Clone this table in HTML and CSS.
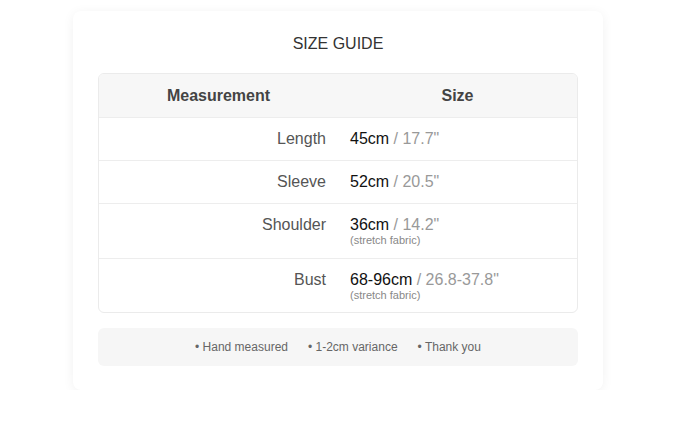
FILE: index.html
```html
<!DOCTYPE html>
<html>
<head>
<meta charset="utf-8">
<link rel="stylesheet" href="styles.css">
</head>
<body>
<div class="card">
  <h2 class="title">SIZE GUIDE</h2>
  <div class="table">
    <div class="row head">
      <div class="cell hcell">Measurement</div>
      <div class="cell hcell">Size</div>
    </div>
    <div class="row">
      <div class="cell label">Length</div>
      <div class="cell value"><span class="cm">45cm</span> <span class="in">/ 17.7"</span></div>
    </div>
    <div class="row">
      <div class="cell label">Sleeve</div>
      <div class="cell value"><span class="cm">52cm</span> <span class="in">/ 20.5"</span></div>
    </div>
    <div class="row">
      <div class="cell label">Shoulder</div>
      <div class="cell value"><span class="cm">36cm</span> <span class="in">/ 14.2"</span><div class="note">(stretch fabric)</div></div>
    </div>
    <div class="row last">
      <div class="cell label">Bust</div>
      <div class="cell value"><span class="cm">68-96cm</span> <span class="in">/ 26.8-37.8"</span><div class="note">(stretch fabric)</div></div>
    </div>
  </div>
  <div class="footer">
    <span>• Hand measured</span>
    <span>• 1-2cm variance</span>
    <span>• Thank you</span>
  </div>
</div>
</body>
</html>
```
FILE: styles.css
```css
body {
  margin: 0;
  padding-left: 2px;
  background: #fff;
  font-family: "Liberation Sans", Arial, sans-serif;
}
.card {
  width: 530px;
  box-sizing: border-box;
  margin: 11px auto 0;
  padding: 24px 25px 24px;
  background: #fff;
  border-radius: 8px;
  box-shadow: 0 2px 12px rgba(0,0,0,0.06);
}
.title {
  margin: 0 0 20px;
  text-align: center;
  font-size: 16px;
  line-height: 18px;
  font-weight: normal;
  color: #333;
}
.table {
  border: 1px solid #ebebeb;
  border-radius: 6px;
  overflow: hidden;
}
.row {
  display: grid;
  grid-template-columns: 1fr 1fr;
  border-bottom: 1px solid #ededed;
}
.row.last { border-bottom: none; }
.head { background: #f7f7f7; }
.cell {
  padding: 12px 12px;
  font-size: 16px;
  line-height: 18px;
}
.hcell {
  text-align: center;
  font-weight: bold;
  color: #444;
  padding-top: 13px;
}
.label {
  text-align: right;
  color: #555;
}
.last .cell { padding-bottom: 11px; }
.cm { color: #111; }
.in { color: #999; }
.note {
  font-size: 11px;
  line-height: 12px;
  color: #888;
}
.footer {
  margin-top: 15px;
  background: #f6f6f6;
  border-radius: 6px;
  height: 38px;
  display: flex;
  justify-content: center;
  align-items: center;
  gap: 20px;
  font-size: 12px;
  color: #666;
}
```
